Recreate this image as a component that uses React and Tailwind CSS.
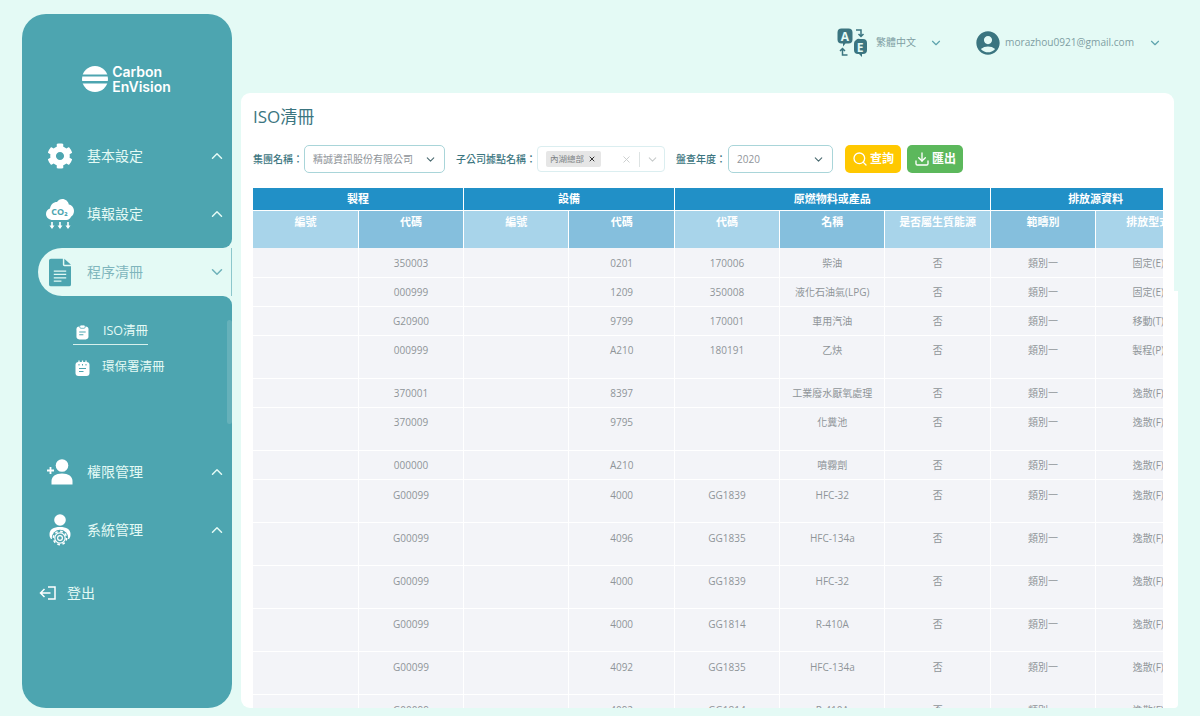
import React from 'react';
import { FaCog } from 'react-icons/fa';
import { MdAccountCircle } from 'react-icons/md';
import { ChevronDown, ChevronUp, Search, Download, X } from 'lucide-react';

const CloudIcon = () => (
  <svg width="30" height="32" viewBox="0 0 30 32">
    <path d="M8 22c-4 0-7-2.600-7-6 0-2.600 1.700-4.600 4-5.400C5.500 6.700 8.500 4 12 4c1.200-2 3.200-3 5.300-3 3.300 0 6 2.400 6.500 5.500 3.200.6 5.200 3.200 5.200 6.500 0 2.500-1.200 4.600-3 5.800-.6 1.900-2.400 3.200-4.500 3.200H8z" fill="#fff" />
    <text x="14.500" y="16.500" textAnchor="middle" fontSize="9" fontWeight="700" fill="#4da5b0" fontFamily="Open Sans">CO₂</text>
    <path d="M7 24v5M15 24v5M23 24v5" stroke="#fff" strokeWidth="1.600" />
    <path d="M4.500 27.500h5L7 31zM12.500 27.500h5L15 31zM20.500 27.500h5L23 31z" fill="#fff" />
  </svg>
);

const DocIcon = () => (
  <svg width="22" height="29" viewBox="0 0 23 29">
    <path d="M2 0h12.500v6.500c0 .8.700 1.500 1.500 1.500h7v19a2 2 0 0 1-2 2H2a2 2 0 0 1-2-2V2a2 2 0 0 1 2-2z" fill="#4da5b0" />
    <path d="M16 0l7 6.500h-7z" fill="#4da5b0" />
    <path d="M5 13h13M5 16.500h13M5 20h13M5 23.500h8" stroke="#e4faf5" strokeWidth="1.300" />
  </svg>
);

const ClipIcon = () => (
  <svg width="14" height="16" viewBox="0 0 14 16">
    <rect x="0.500" y="2" width="13" height="14" rx="3" fill="#fff" />
    <rect x="4" y="0.500" width="6" height="3.500" rx="1.500" fill="#fff" stroke="#4da5b0" strokeWidth="0.800" />
    <path d="M3.500 8h7M3.500 11h4.500" stroke="#4da5b0" strokeWidth="1.200" />
  </svg>
);

const NoteIcon = () => (
  <svg width="15" height="16" viewBox="0 0 15 16">
    <rect x="0.500" y="2" width="14" height="14" rx="3" fill="#fff" />
    <path d="M4 0.500v3.500M7.500 0.500v3.500M11 0.500v3.500" stroke="#fff" strokeWidth="1.300" />
    <path d="M4 4v1.500M7.500 4v1.500M11 4v1.500" stroke="#4da5b0" strokeWidth="1" />
    <path d="M4 8.500h7M4 11.500h4.500" stroke="#4da5b0" strokeWidth="1.200" />
  </svg>
);

const UserAddIcon = () => (
  <svg width="26" height="26" viewBox="0 0 26 26">
    <circle cx="15" cy="6.500" r="6.300" fill="#fff" />
    <path d="M4.500 25.500v-3.500c0-4.500 4-7.500 10.500-7.500s10.500 3 10.500 7.500v3.500z" fill="#fff" />
    <path d="M0 11.500h7M3.500 8v7" stroke="#fff" strokeWidth="1.800" />
  </svg>
);

const UserGearIcon = () => (
  <svg width="22" height="32" viewBox="0 0 22 32">
    <circle cx="11" cy="6" r="5.800" fill="#fff" />
    <path d="M2 25c-1.200-1.500-1.500-3-1.500-5 0-4.500 4-7 10.500-7s10.500 2.500 10.500 7c0 2-.3 3.500-1.500 5z" fill="#fff" />
    <circle cx="11" cy="24" r="8.200" fill="#4da5b0" />
    <circle cx="11" cy="24" r="5.200" fill="none" stroke="#fff" strokeWidth="1.200" />
    <circle cx="11" cy="24" r="2.400" fill="none" stroke="#fff" strokeWidth="1.200" />
    <circle cx="11" cy="24" r="6.600" fill="none" stroke="#fff" strokeWidth="1.600" strokeDasharray="2.600 2.580" />
  </svg>
);

const LogoutIcon = () => (
  <svg width="17" height="14" viewBox="0 0 17 14" fill="none" stroke="#fff" strokeWidth="1.500">
    <path d="M9 1h7v12H9" />
    <path d="M11.500 7H1.500M5.500 3L1.500 7l4 4" />
  </svg>
);

const TranslateIcon = () => (
  <svg width="30" height="29" viewBox="0 0 30 29">
    <path d="M4 0h7a4 4 0 0 1 4 4v7a4 4 0 0 1-4 4H8l-2.500 3V15H4a4 4 0 0 1-4-4V4a4 4 0 0 1 4-4z" fill="#3b7580" transform="translate(0.500 0.500)" />
    <text x="8" y="12.500" textAnchor="middle" fontSize="12" fontWeight="700" fill="#e4faf5" fontFamily="Open Sans">A</text>
    <path d="M19 12a4 4 0 0 1 4-1h3a4 4 0 0 1 4 4v7a4 4 0 0 1-4 4h-1v3l-3-3h-1a4 4 0 0 1-4-4v-6a4 4 0 0 1 2-4z" fill="#3b7580" />
    <text x="23" y="23.500" textAnchor="middle" fontSize="12" fontWeight="700" fill="#e4faf5" fontFamily="Open Sans">E</text>
    <path d="M19 2h5v6M21.500 6l2.500 2.500L26.500 6" fill="none" stroke="#3b7580" strokeWidth="1.500" />
    <path d="M10.500 27h-5v-6M3 23l2.500-2.500L8 23" fill="none" stroke="#3b7580" strokeWidth="1.500" />
  </svg>
);

const MenuItem = ({ icon, label }) => (
  <div className="flex h-[58px] items-center">
    <div className="flex w-[65px] justify-center pl-[10px]">{icon}</div>
    <span className="flex-1 pb-[1px] text-[14px] text-[#e4faf5]">{label}</span>
    <ChevronUp size={18} strokeWidth={2} className="mr-[6px] text-[#e4faf5]" />
  </div>
);

const rows = [
  ['350003', '0201', '170006', '柴油', '固定(E)', 'h-[29px] [&>td]:pt-[7px]', '類別一'],
  ['000999', '1209', '350008', '液化石油氣(LPG)', '固定(E)', 'h-[29px]', '類別一'],
  ['G20900', '9799', '170001', '車用汽油', '移動(T)', 'h-[29px]', '類別一'],
  ['000999', 'A210', '180191', '乙炔', '製程(P)', 'h-[43px]', '類別一'],
  ['370001', '8397', '', '工業廢水厭氧處理', '逸散(F)', 'h-[29px]', '類別一'],
  ['370009', '9795', '', '化糞池', '逸散(F)', 'h-[43px]', '類別一'],
  ['000000', 'A210', '', '噴霧劑', '逸散(F)', 'h-[29px]', '類別一'],
  ['G00099', '4000', 'GG1839', 'HFC-32', '逸散(F)', 'h-[43px] [&>td]:pt-[7px]', '類別一'],
  ['G00099', '4096', 'GG1835', 'HFC-134a', '逸散(F)', 'h-[43px] [&>td]:pt-[7px]', '類別一'],
  ['G00099', '4000', 'GG1839', 'HFC-32', '逸散(F)', 'h-[43px] [&>td]:pt-[7px]', '類別一'],
  ['G00099', '4000', 'GG1814', 'R-410A', '逸散(F)', 'h-[43px] [&>td]:pt-[7px]', '類別一'],
  ['G00099', '4092', 'GG1835', 'HFC-134a', '逸散(F)', 'h-[43px] [&>td]:pt-[7px]', '類別一'],
  ['G00099', '4092', 'GG1814', 'R-410A', '逸散(F)', 'h-[43px] [&>td]:pt-[7px]', '類別一'],
];

const groupTh = 'h-[22px] border-r border-b border-white bg-[#2190c7] p-0 text-center align-middle text-[11px] font-bold text-white';
const lightTh = 'h-[38px] border-r border-white bg-[#a8d4ea] p-0 pt-[3px] text-center align-top text-[11px] font-bold text-white';
const darkTh = 'h-[38px] border-r border-white bg-[#85bfdd] p-0 pt-[3px] text-center align-top text-[11px] font-bold text-white';
const td = 'border-r border-b border-white p-0 pt-[6px] text-center align-top text-[10px] leading-[16px] text-[#8f9499]';

const Label = ({ children }) => (
  <span className="text-[10px] font-medium whitespace-nowrap text-[#3b7580]">{children}</span>
);

export default function App() {
  return (
    <div className="flex h-[716px] w-[1200px] overflow-hidden bg-[#e4faf5] pt-[14px] pb-[8px] pl-[22px] font-['Open_Sans','Noto_Sans_CJK_TC',sans-serif]">
      <aside className="flex w-[210px] flex-col">
        <div className="h-[234px] rounded-t-[24px] rounded-br-[9px] bg-[#4da5b0]">
          <div className="flex h-[113px] items-center justify-center gap-[4px] pt-[16px] pr-[1px]">
            <svg width="26" height="26" viewBox="0 0 26 26">
              <defs>
                <clipPath id="logoClip">
                  <circle cx="13" cy="13" r="13" />
                </clipPath>
              </defs>
              <g clipPath="url(#logoClip)" fill="#fff">
                <rect x="0" y="0" width="26" height="8.500" />
                <rect x="0" y="10.500" width="26" height="4.500" />
                <rect x="0" y="17.500" width="26" height="9" />
              </g>
            </svg>
            <div className="font-['Inter',sans-serif] text-[14px] leading-[15px] font-semibold text-white">
              <div>Carbon</div>
              <div>EnVision</div>
            </div>
          </div>
          <MenuItem icon={<FaCog size={26} color="#fff" />} label="基本設定" />
          <MenuItem icon={<CloudIcon />} label="填報設定" />
        </div>

        <div className="h-[48px] bg-[#4da5b0] pl-[16px]">
          <div className="flex h-full items-center rounded-l-[24px] border-r border-[#8cc7cc] bg-[#e4faf5]">
            <div className="flex w-[49px] pl-[11px]"><DocIcon /></div>
            <span className="flex-1 pb-[1px] text-[14px] text-[#7fb6bd]">程序清冊</span>
            <ChevronDown size={18} strokeWidth={2} className="mr-[5px] text-[#6fb2ba]" />
          </div>
        </div>

        <div className="relative flex-1 rounded-tr-[9px] rounded-b-[24px] bg-[#4da5b0] pt-[22px]">
          <div className="absolute top-[24px] right-0 h-[104px] w-[5px] rounded-full bg-[#66b1ba]" />
          <div className="ml-[51px] flex h-[27px] w-[75px] items-center gap-[14px] border-b border-[#d7f0ec] pt-[1px] pl-[3px]">
            <ClipIcon />
            <span className="text-[12.500px] whitespace-nowrap text-[#e4faf5]">ISO清冊</span>
          </div>
          <div className="ml-[52px] flex h-[45px] items-center gap-[12px] pl-[1px]">
            <NoteIcon />
            <span className="text-[12.500px] text-[#e4faf5]">環保署清冊</span>
          </div>
          <div className="mt-[53px]">
            <MenuItem icon={<UserAddIcon />} label="權限管理" />
            <MenuItem icon={<UserGearIcon />} label="系統管理" />
          </div>
          <div className="mt-[23px] flex items-center gap-[11px] pl-[17px]">
            <LogoutIcon />
            <span className="text-[14px] text-[#e4faf5]">登出</span>
          </div>
        </div>
      </aside>

      <main className="ml-[9px] flex w-[933px] flex-col">
        <header className="flex h-[79px] shrink-0 items-start justify-end pt-[14px] pr-[12px]">
          <div className="flex h-[29px] items-center">
            <TranslateIcon />
            <span className="ml-[9px] text-[10px] text-[#7e9ea3]">繁體中文</span>
            <ChevronDown size={14} className="ml-[13px] text-[#5ea3ad]" />
            <MdAccountCircle size={28} className="ml-[31px] text-[#3b7580]" />
            <span className="ml-[3px] text-[10.100px] text-[#7e9ea3]">morazhou0921@gmail.com</span>
            <ChevronDown size={14} className="ml-[14px] text-[#5ea3ad]" />
          </div>
        </header>

        <section className="relative h-[615px] rounded-t-[9px] rounded-bl-[9px] bg-white px-[12px]">
          <div className="absolute top-[198px] bottom-0 left-full w-[4px] rounded-br-[9px] bg-white" />
          <h1 className="flex h-[46px] items-center text-[17px] leading-none text-[#3b7580]">ISO清冊</h1>

          <div className="mt-[6px] flex h-[28px] items-center">
            <Label>集團名稱：</Label>
            <div className="ml-[1px] flex h-[28px] w-[141px] items-center justify-between rounded-[5px] border border-[#a9d5d9] pr-[7px] pl-[8px]">
              <span className="text-[10px] text-[#8f9499]">精誠資訊股份有限公司</span>
              <ChevronDown size={13} className="text-[#4a6a70]" />
            </div>
            <span className="ml-[11px] flex"><Label>子公司據點名稱：</Label></span>
            <div className="ml-[1px] flex h-[26px] w-[128px] items-center rounded-[4px] border border-[#dbeef0] pl-[8px]">
              <div className="flex h-[16px] w-[55px] items-center justify-between rounded-[2px] bg-[#e6e6e6] pr-[5px] pl-[4px]">
                <span className="text-[8.500px] text-[#7c8184]">內湖總部</span>
                <X size={8} strokeWidth={3} className="text-[#333]" />
              </div>
              <X size={11} className="ml-[20px] text-[#c8cccc]" />
              <div className="ml-[7px] h-[15px] w-px bg-[#dde3e3]" />
              <ChevronDown size={13} className="ml-[6px] text-[#c8cccc]" />
            </div>
            <span className="ml-[11px] flex"><Label>盤查年度：</Label></span>
            <div className="ml-[2px] flex h-[28px] w-[105px] items-center justify-between rounded-[5px] border border-[#a9d5d9] pr-[7px] pl-[8px]">
              <span className="text-[10px] text-[#8f9499]">2020</span>
              <ChevronDown size={13} className="text-[#4a6a70]" />
            </div>
            <button className="ml-[12px] flex h-[28px] w-[56px] items-center justify-center gap-[2px] rounded-[5px] bg-[#ffc800] text-[12px] font-bold text-white">
              <Search size={16} />查詢
            </button>
            <button className="ml-[6px] flex h-[28px] w-[56px] items-center justify-center gap-[2px] rounded-[5px] bg-[#5cb85c] text-[12px] font-bold text-white">
              <Download size={16} />匯出
            </button>
          </div>

          <div className="mt-[15px] h-[520px] w-[910px] overflow-hidden">
            <table className="w-[948px] table-fixed border-collapse">
              <colgroup>
                {[0, 1, 2, 3, 4, 5, 6, 7, 8].map((i) => <col key={i} className="w-[105.330px]" />)}
              </colgroup>
              <thead>
                <tr>
                  <th colSpan={2} className={groupTh}>製程</th>
                  <th colSpan={2} className={groupTh}>設備</th>
                  <th colSpan={3} className={groupTh}>原燃物料或產品</th>
                  <th colSpan={2} className={groupTh}>排放源資料</th>
                </tr>
                <tr>
                  <th className={lightTh}>編號</th>
                  <th className={darkTh}>代碼</th>
                  <th className={lightTh}>編號</th>
                  <th className={darkTh}>代碼</th>
                  <th className={lightTh}>代碼</th>
                  <th className={darkTh}>名稱</th>
                  <th className={lightTh}>是否屬生質能源</th>
                  <th className={darkTh}>範疇別</th>
                  <th className={lightTh}>排放型式</th>
                </tr>
              </thead>
              <tbody className="bg-[#f3f4f8]">
                {rows.map((r, i) => (
                  <tr key={i} className={r[5]}>
                    <td className={td}></td>
                    <td className={td}>{r[0]}</td>
                    <td className={td}></td>
                    <td className={td}>{r[1]}</td>
                    <td className={td}>{r[2]}</td>
                    <td className={td}>{r[3]}</td>
                    <td className={td}>否</td>
                    <td className={td}>{r[6]}</td>
                    <td className={td}>{r[4]}</td>
                  </tr>
                ))}
              </tbody>
            </table>
          </div>
        </section>
      </main>
    </div>
  );
}
